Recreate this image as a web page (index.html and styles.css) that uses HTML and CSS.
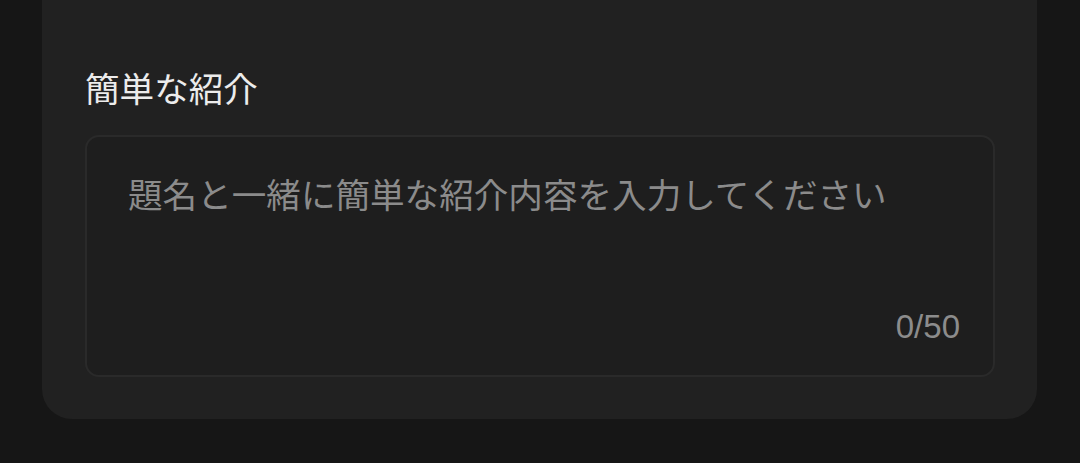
FILE: index.html
```html
<!DOCTYPE html>
<html lang="ja">
<head>
<meta charset="utf-8">
<link rel="stylesheet" href="styles.css">
</head>
<body>
<main class="page">
  <section class="card">
    <h2 class="label">簡単な紹介</h2>
    <div class="field">
      <p class="placeholder">題名と一緒に簡単な紹介内容を入力してください</p>
      <span class="counter">0/50</span>
    </div>
  </section>
</main>
</body>
</html>
```

FILE: styles.css
```css
html, body {
  margin: 0;
  padding: 0;
  background: #161616;
  height: 100%;
}
.page {
  padding: 0 43px 0 42px;
  font-family: "Noto Sans CJK JP", "Noto Sans", sans-serif;
}
.card {
  background: #212121;
  border-radius: 0 0 30px 30px;
  padding: 63px 42px 42px 43px;
  display: flex;
  flex-direction: column;
  gap: 24px;
}
.label {
  margin: 0;
  font-size: 34.6px;
  line-height: 48px;
  font-weight: 400;
  color: #ececec;
}
.field {
  height: 242px;
  box-sizing: border-box;
  border: 2px solid #2a2a2a;
  border-radius: 14px;
  background: #1e1e1e;
  padding: 32px 33px 28px 41px;
  display: flex;
  flex-direction: column;
  justify-content: space-between;
}
.placeholder {
  margin: 0;
  font-size: 34.6px;
  line-height: 48px;
  color: #8b8b8b;
}
.counter {
  align-self: flex-end;
  font-family: "Liberation Sans", Arial, sans-serif;
  font-size: 33px;
  line-height: 40px;
  color: #8c8c8c;
}
```
